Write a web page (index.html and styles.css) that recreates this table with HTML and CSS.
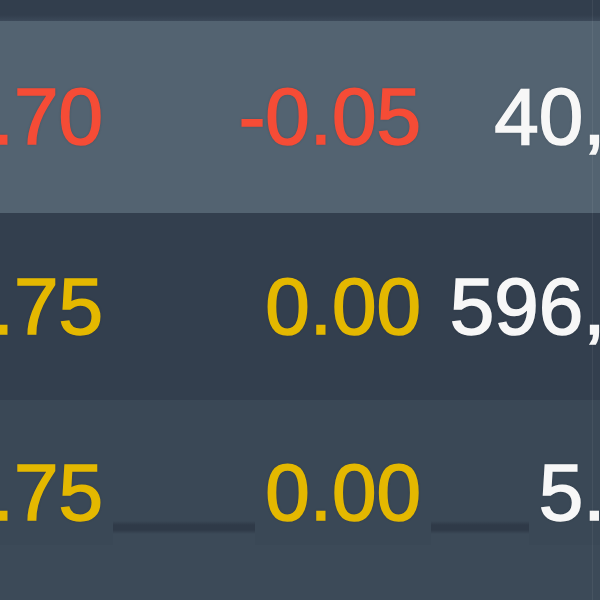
FILE: index.html
```html
<!DOCTYPE html>
<html lang="en">
<head>
    <meta charset="UTF-8">
    <meta name="viewport" content="width=device-width, initial-scale=1.0">
    <title>Quotes</title>
    <link rel="stylesheet" href="styles.css">
</head>
<body>
    <div class="board">
        <div class="topbar"></div>

        <div class="table">
            <div class="row row-up">
                <div class="cell"><span class="val down">2.70</span></div>
                <div class="cell"><span class="val down">-0.05</span></div>
                <div class="cell"><span class="val vol">40,250</span></div>
            </div>
            <div class="row row-dark">
                <div class="cell"><span class="val flat">2.75</span></div>
                <div class="cell"><span class="val flat">0.00</span></div>
                <div class="cell"><span class="val vol">596,100</span></div>
            </div>
            <div class="row row-last">
                <div class="cell"><span class="val flat">2.75</span></div>
                <div class="cell"><span class="val flat">0.00</span></div>
                <div class="cell"><span class="val vol">5.124</span></div>
            </div>
        </div>

        <!-- edge of the scroll pane -->
        <div class="edge"></div>
    </div>
</body>
</html>
```

FILE: styles.css
```css
body {
    margin: 0;
    background: #3b4957;
    font-family: "Liberation Sans", Arial, sans-serif;
    overflow: hidden;
}
.board {
    position: relative;
    width: 600px;
    height: 600px;
    overflow: hidden;
}
.topbar {
    height: 21px;
    background: linear-gradient(#323e4d 0, #323e4d 15px, #3c4959 21px);
}
.table {
    margin-left: -80px;
    width: 821px;
}
.row {
    display: grid;
    grid-template-columns: 183px 318px 318px;
    align-items: center;
}
.row-up {
    height: 192px;
    background: #536371;
}
.row-dark {
    height: 187px;
    background: #333f4e;
}
.row-last {
    height: 200px;
    align-items: start;
    padding-top: 53px;
    box-sizing: border-box;
    background: linear-gradient(#3a4856 0, #3a4856 121px, #2f3a48 125px, #2f3a48 130px, #3c4a58 134px);
}
.cell {
    display: flex;
    justify-content: flex-end;
}
.val {
    display: inline-block;
    font-size: 80px;
    line-height: 1;
    white-space: nowrap;
    -webkit-text-stroke: 1.6px currentColor;
    text-shadow: 0 0 3px rgba(20, 28, 40, 0.35);
}
.row-last .val {
    background: #3a4856;
    box-shadow: 0 2px 0 10px #3a4856;
}
.down {
    color: #f54c36;
}
.flat {
    color: #e4b800;
}
.vol {
    color: #f7f7f7;
}
.edge {
    position: absolute;
    top: 0;
    bottom: 0;
    left: 592px;
    width: 1px;
    background: rgba(255, 255, 255, 0.06);
}
```
